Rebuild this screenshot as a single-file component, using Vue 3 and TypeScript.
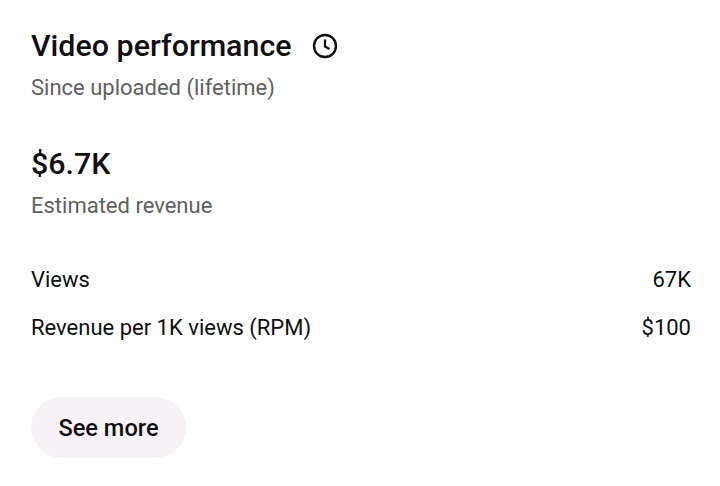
<script setup lang="ts">
const rows = [
  { label: 'Views', value: '67K' },
  { label: 'Revenue per 1K views (RPM)', value: '$100' },
]
</script>

<template>
  <main class="card">
    <div class="title-row">
      <h1 class="title">Video performance</h1>
      <svg class="clock" width="26" height="26" viewBox="0 0 26 26" fill="none" stroke="#0f0f0f" stroke-width="2.4">
        <circle cx="13" cy="13" r="11" />
        <path d="M13 6.5V13.5L17.5 16" stroke-width="2.2" />
      </svg>
    </div>
    <p class="sub">Since uploaded (lifetime)</p>
    <div class="big">$6.7K</div>
    <p class="sub rev">Estimated revenue</p>
    <div class="rows">
      <div v-for="row in rows" :key="row.label" class="row">
        <span>{{ row.label }}</span>
        <span>{{ row.value }}</span>
      </div>
    </div>
    <button class="more">See more</button>
  </main>
</template>

<style scoped>
.card {
  width: 720px;
  height: 486px;
  box-sizing: border-box;
  padding: 27px 29px 0 31px;
  background: #fff;
  color: #0f0f0f;
  font-family: Roboto, "Noto Sans", sans-serif;
  overflow: hidden;
}
.title-row {
  display: flex;
  align-items: center;
  gap: 20px;
  height: 37px;
}
.title {
  margin: 0;
  font-size: 30.4px;
  font-weight: 500;
  line-height: 36px;
}
.sub {
  margin: 8px 0 0;
  font-size: 22px;
  line-height: 32px;
  color: #606060;
}
.big {
  margin-top: 41px;
  font-size: 30.4px;
  font-weight: 500;
  line-height: 38px;
}
.rev {
  margin-top: 7px;
}
.rows {
  margin-top: 42px;
  display: flex;
  flex-direction: column;
  gap: 16px;
}
.row {
  display: flex;
  justify-content: space-between;
  font-size: 22px;
  line-height: 32px;
}
.more {
  display: block;
  margin-top: 53px;
  width: 155px;
  height: 61px;
  border: 0;
  border-radius: 31px;
  background: #f6f2f6;
  color: #0f0f0f;
  font-family: inherit;
  font-size: 23.6px;
  font-weight: 500;
  padding: 0;
}
</style>
